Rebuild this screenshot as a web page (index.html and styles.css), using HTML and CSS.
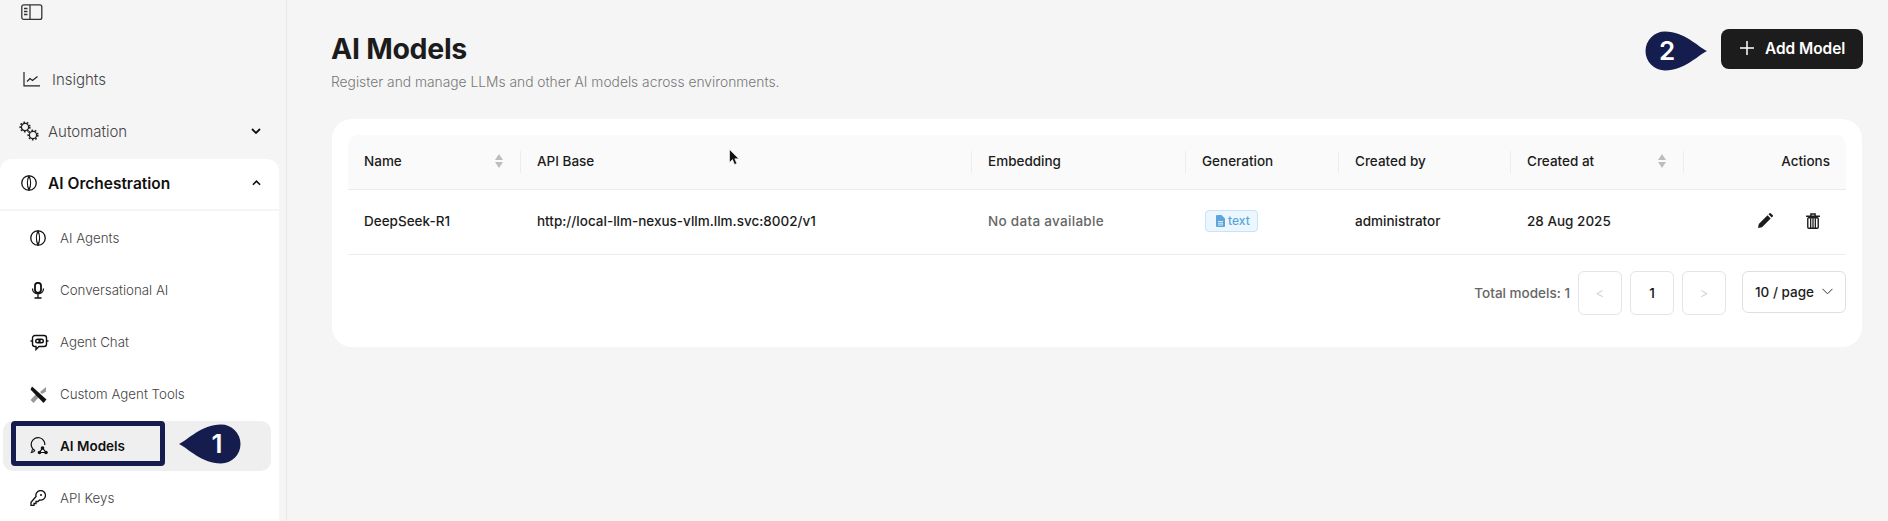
FILE: index.html
```html
<!DOCTYPE html>
<html>

<head>
  <meta charset="utf-8" />
  <title>AI Models</title>
  <link rel="stylesheet" href="styles.css">
</head>

<body>
  <div class="page">
    <aside class="sidebar">
      <svg class="toggle" width="22" height="17" viewBox="0 0 22 17" fill="none" stroke="#333" stroke-width="1.3">
        <rect x="0.8" y="0.8" width="20" height="14.6" rx="2" />
        <path d="M9 1v14" />
        <path d="M3 4.5h3.5M3 7.5h3.5M3 10.5h3.5" stroke-width="1.4" />
      </svg>

      <a class="nav-item insights">
        <svg width="17" height="15" viewBox="0 0 17 15" fill="none" stroke="#222" stroke-width="1.2">
          <path d="M1 0v13.8h16" />
          <path d="M4 9.5l3-3 2.5 2 5-4" />
        </svg>
        <span>Insights</span>
      </a>

      <a class="nav-item automation">
        <svg width="20" height="20" viewBox="0 0 20 20" fill="none" stroke="#222">
          <circle cx="6" cy="6" r="3.6" stroke-width="1.3" />
          <circle cx="6" cy="6" r="4.8" stroke-width="1.6" stroke-dasharray="1.7 1.7" />
          <circle cx="14" cy="14" r="3.6" stroke-width="1.3" />
          <circle cx="14" cy="14" r="4.8" stroke-width="1.6" stroke-dasharray="1.7 1.7" />
        </svg>
        <span>Automation</span>
        <svg class="chev" width="10" height="6" viewBox="0 0 10 6" fill="none" stroke="#111" stroke-width="1.8">
          <path d="M1 1l4 4 4-4" />
        </svg>
      </a>

      <div class="group">
        <div class="group-head">
          <svg width="16" height="16" viewBox="0 0 16 16" fill="none" stroke="#111" stroke-width="1.3">
            <rect x="0.8" y="0.8" width="14.4" height="14.4" rx="7" />
            <path d="M8 1C6 5 6 11 8 15C10 11 10 5 8 1z" />
          </svg>
          <span>AI Orchestration</span>
          <svg class="chev" width="9" height="6" viewBox="0 0 10 6" fill="none" stroke="#111" stroke-width="1.8">
            <path d="M1 5l4-4 4 4" />
          </svg>
        </div>

        <a class="sub-item">
          <svg width="16" height="16" viewBox="0 0 16 16" fill="none" stroke="#111" stroke-width="1.3">
            <rect x="0.8" y="0.8" width="14.4" height="14.4" rx="7" />
            <path d="M8 1C6 5 6 11 8 15C10 11 10 5 8 1z" />
          </svg>
          <span>AI Agents</span>
        </a>
        <a class="sub-item">
          <svg width="16" height="17" viewBox="0 0 16 17" fill="none" stroke="#111" stroke-width="1.3">
            <rect x="5" y="0.8" width="6" height="10" rx="3" stroke-width="1.8" />
            <path d="M2.5 6.5c0 7 11 7 11 0M8 12.5V16M4.5 16h7" />
          </svg>
          <span>Conversational AI</span>
        </a>
        <a class="sub-item">
          <svg width="19" height="17" viewBox="0 0 19 17" fill="none" stroke="#111" stroke-width="1.4">
            <path d="M5 1.5h9a2.5 2.5 0 0 1 2.5 2.5v6a2.5 2.5 0 0 1-2.5 2.5H9l-3 3v-3H5A2.5 2.5 0 0 1 2.5 10V4A2.5 2.5 0 0 1 5 1.5z" />
            <rect x="5" y="4.5" width="9" height="5" rx="2.5" fill="#111" stroke="none" />
            <circle cx="7.5" cy="7" r="1.1" fill="#fff" stroke="none" />
            <circle cx="11.5" cy="7" r="1.1" fill="#fff" stroke="none" />
            <path d="M0.5 7h2M16.5 7h2" />
          </svg>
          <span>Agent Chat</span>
        </a>
        <a class="sub-item">
          <svg width="17" height="17" viewBox="0 0 17 17">
            <path d="M0.5 14l5.5-6 3 3-5.5 6z" fill="#999" />
            <path d="M2 .5l14.5 13-3 3.5L.5 3.5z" fill="#111" />
            <path d="M16 1l-6 5 2 2 4-2.5z" fill="#999" />
          </svg>
          <span>Custom Agent Tools</span>
        </a>
        <a class="sub-item active">
          <svg width="19" height="18" viewBox="0 0 19 18" fill="none" stroke="#111" stroke-width="1.2">
            <path d="M5 13.5A6.8 6.8 0 1 1 14.8 8M5 13.5c-.8 1-2 1.7-3.5 2 .6-1 .8-2 .5-3" />
            <circle cx="12.5" cy="11" r="1.8" fill="#111" stroke="none" />
            <circle cx="9.5" cy="15.5" r="1.8" fill="#111" stroke="none" />
            <circle cx="16" cy="15.5" r="1.8" fill="#111" stroke="none" />
            <path d="M12.5 11l-3 4.5H16z" />
          </svg>
          <span>AI Models</span>
          <i class="highlight"></i>
          <svg class="callout callout-one" width="62" height="40" viewBox="0 0 62 40">
            <path d="M0 20C10 15 22 1 42 .5a19.5 19.5 0 0 1 0 39C22 39 10 25 0 20z" fill="#141d4d" />
            <text x="38" y="29" class="callout-num">1</text>
          </svg>
        </a>
        <a class="sub-item">
          <svg width="16" height="16" viewBox="0 0 16 16" fill="none" stroke="#111" stroke-width="1.3">
            <path d="M6 6.5a4.8 4.8 0 1 1 3.5 3.5L8 11.5H6v2H4v1.8H1v-3z" />
            <circle cx="11" cy="5" r="1" fill="#111" stroke="none" />
          </svg>
          <span>API Keys</span>
        </a>
      </div>
    </aside>

    <main class="main">
      <header class="top">
        <div>
          <h1>AI Models</h1>
          <p class="sub">Register and manage LLMs and other AI models across environments.</p>
        </div>
        <button class="add-btn">
          <svg width="14" height="14" viewBox="0 0 14 14" stroke="#fff" stroke-width="1.5"><path d="M7 0v14M0 7h14" /></svg>
          Add Model
        </button>
      </header>

      <svg class="callout callout-two" width="62" height="40" viewBox="0 0 62 40">
        <path d="M62 20C52 15 40 1 20 .5a19.5 19.5 0 0 0 0 39C40 39 52 25 62 20z" fill="#141d4d" />
        <text x="22" y="29" class="callout-num">2</text>
      </svg>

      <section class="card">
        <table>
          <colgroup>
            <col class="c-name"><col class="c-api"><col class="c-emb"><col class="c-gen"><col class="c-by"><col class="c-at"><col class="c-act">
          </colgroup>
          <thead>
            <tr>
              <th><div class="th-in">Name<i class="sort"></i></div></th>
              <th>API Base</th>
              <th>Embedding</th>
              <th>Generation</th>
              <th>Created by</th>
              <th><div class="th-in">Created at<i class="sort"></i></div></th>
              <th class="right">Actions</th>
            </tr>
          </thead>
          <tbody>
            <tr>
              <td>DeepSeek-R1</td>
              <td>http://local-llm-nexus-vllm.llm.svc:8002/v1</td>
              <td class="muted">No data available</td>
              <td>
                <span class="tag">
                  <svg width="9" height="12" viewBox="0 0 9 12"><path d="M1 0h4.5L9 3.5V11a1 1 0 0 1-1 1H1a1 1 0 0 1-1-1V1a1 1 0 0 1 1-1z" fill="#5aa6dc" /><path d="M2 6.5h5M2 8.3h5M2 10h5" stroke="#e6f4ff" stroke-width="0.9" /></svg>
                  text
                </span>
              </td>
              <td>administrator</td>
              <td>28 Aug 2025</td>
              <td>
                <div class="actions">
                  <svg width="15" height="15" viewBox="0 0 15 15" fill="#1c1c1c"><path d="M0 15l.8-4L9.5 2.3l3.2 3.200L4 14.2zM10.500 1.300L11.600.2a.8.8 0 0 1 1.100 0l2.100 2.100a.8.8 0 0 1 0 1.100l-1.100 1.100z" /></svg>
                  <svg width="14" height="16" viewBox="0 0 13 15" fill="none" stroke="#1c1c1c"><path d="M0 3h13M4.5 2.5V1h4v1.5" stroke-width="1.3" /><rect x="1.6" y="4.5" width="9.8" height="9.8" rx="1" stroke-width="1.3" /><path d="M4.3 5v9M6.500 5v9M8.700 5v9" stroke-width="1.2" /></svg>
                </div>
              </td>
            </tr>
          </tbody>
        </table>

        <div class="pager">
          <span class="total">Total models: 1</span>
          <span class="pg off">&lt;</span>
          <span class="pg cur">1</span>
          <span class="pg off">&gt;</span>
          <span class="size">10 / page
            <svg width="11" height="7" viewBox="0 0 11 7" fill="none" stroke="#333"><path d="M.5.800l5 5 5-5" /></svg>
          </span>
        </div>
      </section>

      <svg class="cursor" width="10" height="17" viewBox="0 0 10 17">
        <path d="M.5.5v13l3-3 2 5 2.300-1-2-4.700h4z" fill="#111" stroke="#fff" stroke-width="0.6" />
      </svg>
    </main>
  </div>
</body>

</html>
```

FILE: styles.css
```css
* {
  box-sizing: border-box;
}

html, body {
  height: 100%;
}

body {
  margin: 0;
  background: #f5f5f5;
  font-family: "Inter", "Liberation Sans", sans-serif;
  color: #1c1c1c;
  overflow: hidden;
}

.page {
  display: flex;
  height: 521px;
  overflow: hidden;
}

/* sidebar */
.sidebar {
  width: 287px;
  flex: none;
  border-right: 1px solid #e9e9e9;
}

.toggle {
  display: block;
  margin: 4px 0 32px 21px;
}

.nav-item {
  display: flex;
  align-items: center;
  height: 52px;
  font-size: 15px;
  font-weight: 300;
  color: #444;
}

.insights {
  padding-left: 23px;
  gap: 12px;
}

.automation {
  padding-left: 19px;
  gap: 9px;
  margin-bottom: 2px;
  width: 279px;
}

.chev {
  margin-left: auto;
  margin-right: 18px;
}

.group {
  width: 279px;
  background: #fff;
  border-radius: 12px 12px 0 0;
}

.group-head {
  display: flex;
  align-items: center;
  gap: 11px;
  height: 52px;
  padding: 0 0 2px 21px;
  border-bottom: 2px solid #f5f5f5;
  margin-bottom: 1px;
  font-size: 15.5px;
  font-weight: 600;
  color: #111;
}

.sub-item {
  position: relative;
  display: flex;
  align-items: center;
  height: 52px;
  padding-left: 30px;
  font-size: 13.3px;
  font-weight: 300;
  color: #444;
}

.sub-item svg {
  flex: none;
}

.sub-item span {
  position: absolute;
  left: 60px;
}

.sub-item.active {
  height: 50px;
  margin: 1px 8px 1px 3px;
  padding-left: 27px;
  background: #efefef;
  border-radius: 10px;
  font-size: 13.5px;
  font-weight: 600;
  color: #111;
}

.sub-item.active span {
  left: 57px;
}

/* annotation marks drawn on top of the page */
.highlight {
  position: absolute;
  left: 8px;
  top: 0;
  width: 154px;
  height: 45px;
  border: 5px solid #141d4d;
  border-radius: 4px;
}

.callout {
  position: absolute;
}

.sub-item .callout-one {
  left: 176px;
  top: 3px;
}

.callout-two {
  right: 181px;
  top: 31px;
}

.callout-num {
  font-family: "Inter", sans-serif;
  font-size: 26px;
  font-weight: 600;
  fill: #fff;
  text-anchor: middle;
}

.cursor {
  position: absolute;
  left: 442px;
  top: 149px;
}

/* main */
.main {
  position: relative;
  flex: 1;
  padding: 0 26px 0 45px;
}

.top {
  display: flex;
  justify-content: space-between;
  align-items: flex-start;
  height: 119px;
}

.top h1 {
  margin: 30px 0 0 -1px;
  font-size: 28.5px;
  line-height: 38px;
  font-weight: 700;
  letter-spacing: -0.3px;
}

.sub {
  margin: 5px 0 0 -1px;
  font-size: 13.8px;
  line-height: 18px;
  font-weight: 300;
  color: #777;
}

.add-btn {
  display: flex;
  align-items: center;
  gap: 11px;
  width: 142px;
  height: 40px;
  margin: 29px -1px 0 0;
  padding: 0 0 2px 19px;
  background: #1c1c1c;
  border: 0;
  border-radius: 8px;
  font-family: inherit;
  font-size: 15.4px;
  font-weight: 600;
  color: #fff;
}

.card {
  background: #fff;
  border-radius: 20px;
  padding: 16px 16px 32px;
  height: 228px;
}

table {
  width: 1498px;
  border-collapse: collapse;
  table-layout: fixed;
  font-size: 13.5px;
}

.c-name { width: 172px; }
.c-api { width: 451px; }
.c-emb { width: 214px; }
.c-gen { width: 153px; }
.c-by { width: 172px; }
.c-at { width: 173px; }
.c-act { width: 163px; }

th {
  position: relative;
  height: 54px;
  padding: 0 16px 2px 17px;
  background: #fafafa;
  border-bottom: 1px solid #ececec;
  text-align: left;
  font-weight: 450;
}

th:first-child {
  padding-left: 16px;
  border-top-left-radius: 10px;
}

th:last-child {
  border-top-right-radius: 10px;
}

th:not(:first-child)::before {
  content: "";
  position: absolute;
  left: 0;
  top: 16px;
  height: 22px;
  border-left: 1px solid #ededed;
}

th.right {
  text-align: right;
}

.th-in {
  display: flex;
  align-items: center;
  justify-content: space-between;
}

.sort {
  position: relative;
  width: 8px;
  height: 14px;
  margin-right: 1px;
}

.sort::before,
.sort::after {
  content: "";
  position: absolute;
  left: 0;
  border-left: 4px solid transparent;
  border-right: 4px solid transparent;
}

.sort::before {
  top: 0;
  border-bottom: 6px solid #bdbdbd;
}

.sort::after {
  bottom: 0;
  border-top: 6px solid #bdbdbd;
}

td {
  height: 65px;
  padding: 0 16px 2px 17px;
  border-bottom: 1px solid #ededed;
  font-weight: 450;
}

td:first-child {
  padding-left: 16px;
}

.muted {
  color: #666;
  letter-spacing: 0.3px;
}

.tag {
  display: inline-flex;
  align-items: center;
  gap: 3px;
  height: 22px;
  padding: 0 7px 0 10px;
  margin-left: 3px;
  background: #ebf6fe;
  border: 1px solid #c5e4fb;
  border-radius: 4px;
  font-size: 12px;
  color: #5aa6dc;
}

.actions {
  display: flex;
  justify-content: flex-end;
  align-items: center;
  gap: 33px;
  padding-right: 10px;
}

.pager {
  display: flex;
  align-items: flex-start;
  justify-content: flex-end;
  margin-top: 16px;
  font-size: 13.5px;
  font-weight: 450;
}

.total {
  margin-right: 8px;
  line-height: 44px;
  color: #666;
}

.pg {
  display: flex;
  align-items: center;
  justify-content: center;
  width: 44px;
  height: 44px;
  margin-right: 8px;
  border: 1px solid #e4e4e4;
  border-radius: 6px;
}

.pg.off {
  color: #d0d0d0;
  font-weight: 300;
}

.pg.cur {
  color: #111;
}

.size {
  display: flex;
  align-items: center;
  justify-content: space-between;
  width: 104px;
  height: 42px;
  margin-left: 8px;
  padding: 0 12px;
  border: 1px solid #e0e0e0;
  border-radius: 6px;
}
```
